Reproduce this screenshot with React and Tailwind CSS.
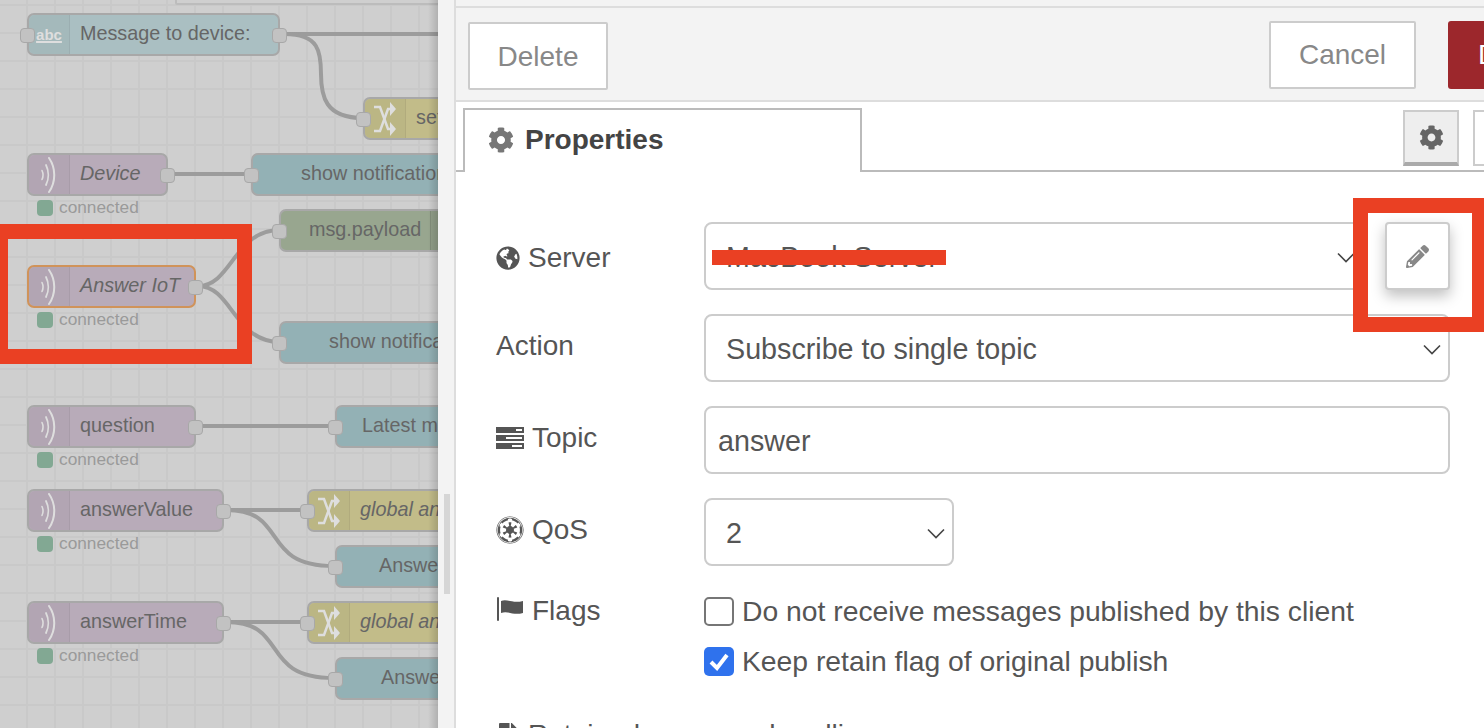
import React from "react";
import { FaCog, FaGlobeAmericas, FaEmpire, FaPencilAlt, FaFile } from "react-icons/fa";

// node colours are the dimmed versions, the editor tray overlay sits on the canvas
const PURPLE = "bg-[#b8abb9]";
const TEAL = "bg-[#aabfc2]";
const BLUE = "bg-[#93b1b5]";
const YELLOW = "bg-[#c2bc89]";
const GREEN = "bg-[#98a68f]";

const WifiIcon = () => (
  <svg width="20" height="36" viewBox="0 0 20 36" fill="none" stroke="#dedede" strokeLinecap="round">
    <path d="M3 13.5c1.4 3 1.4 6 0 9" strokeWidth="1.6" />
    <path d="M7 8c3 6 3 14 0 20" strokeWidth="1.8" />
    <path d="M10 1c7 10 7 24 0 34" strokeWidth="2" />
  </svg>
);

const ShuffleIcon = () => (
  <svg width="22" height="34" viewBox="0 0 22 34" fill="#dedede">
    <path d="M0 5h6l8 22h3" fill="none" stroke="#dedede" strokeWidth="2.5" />
    <path d="M0 29h6l8-22h3" fill="none" stroke="#dedede" strokeWidth="2.5" />
    <path d="M16 0l6 7-6 7z" />
    <path d="M16 20l6 7-6 7z" />
  </svg>
);

const Port = ({ className }) => (
  <div className={`absolute top-[13px] w-[15px] h-[15px] rounded-[4px] bg-[#c2c2c2] border border-[#a8a8a8] ${className}`}></div>
);

const Node = ({ x, y, w, color, label, italic, textLeft = 51, icon, inPort, outPort, selected, status, rightIcon }) => (
  <div className="absolute h-[43px]" style={{ left: x, top: y, width: w }}>
    <div className={`relative h-[43px] rounded-[7px] border-2 ${selected ? "border-[#d0935a]" : "border-[#a8a8a8]"} ${color}`}>
      {icon && (
        <div className="absolute left-0 top-0 bottom-0 w-[41px] flex items-center justify-center border-r border-[#0000000f] bg-[#00000008] rounded-l-[6px]">
          {icon}
        </div>
      )}
      {rightIcon && <div className="absolute right-0 top-0 bottom-0 w-[42px] border-l border-[#0000001a] bg-[#0000000a]"></div>}
      <div
        className={`absolute top-0 bottom-0 pb-[2px] flex items-center text-[19.8px] leading-none whitespace-nowrap text-[#666666] ${italic ? "italic" : ""}`}
        style={{ left: textLeft }}
      >
        {label}
      </div>
      {inPort && <Port className="left-[-9px]" />}
      {outPort && <Port className="right-[-9px]" />}
    </div>
    {status && (
      <div className="flex items-center mt-[3px] ml-[10px] gap-[6px]">
        <div className="w-[16px] h-[16px] rounded-[4px] bg-[#82a893]"></div>
        <span className="text-[17.3px] leading-none text-[#9a9a9a]">connected</span>
      </div>
    )}
  </div>
);

const shuffle = <ShuffleIcon />;
const abc = <span className="text-[15px] font-bold leading-none text-[#dedede] underline decoration-2">abc</span>;

const Canvas = () => (
  <div className="relative w-[438px] h-full shrink-0 overflow-hidden bg-[#cfcfcf] bg-[linear-gradient(#c9c9c9_2px,transparent_2px),linear-gradient(90deg,#c9c9c9_2px,transparent_2px)] bg-[size:28px_28px] bg-[position:26px_32px]">
    <div className="absolute left-[175px] top-[-4px] w-[270px] h-[9px] border-2 border-[#bcbcbc] rounded-[2px] bg-[#cfcfcf]"></div>

    <svg className="absolute inset-0" width="438" height="728" fill="none" stroke="#9c9c9c" strokeWidth="4">
      <path d="M285 34H438" />
      <path d="M285 34c34 0 36 18 36 40c0 22 4 44 42 44" />
      <path d="M170 174H250" />
      <path d="M198 286c34 0 36-56 82-56" />
      <path d="M198 286c34 0 36 56 82 56" />
      <path d="M198 426H334" />
      <path d="M226 510H306" />
      <path d="M226 510c64 0 32 56 108 56" />
      <path d="M226 622H306" />
      <path d="M226 622c64 0 32 56 108 56" />
    </svg>

    <Node x={27} y={13} w={253} color={TEAL} label="Message to device:" icon={abc} inPort outPort />
    <Node x={363} y={97} w={140} color={YELLOW} label="set" icon={shuffle} inPort />
    <Node x={27} y={153} w={141} color={PURPLE} label="Device" italic icon={<WifiIcon />} outPort status />
    <Node x={251} y={153} w={260} color={BLUE} label="show notification" textLeft={48} inPort />
    <Node x={279} y={209} w={195} color={GREEN} label="msg.payload" textLeft={28} inPort rightIcon />
    <Node x={27} y={265} w={169} color={PURPLE} label="Answer IoT" italic icon={<WifiIcon />} outPort selected status />
    <Node x={279} y={321} w={260} color={BLUE} label="show notification" textLeft={48} inPort />
    <Node x={27} y={405} w={169} color={PURPLE} label="question" icon={<WifiIcon />} outPort status />
    <Node x={335} y={405} w={220} color={BLUE} label="Latest msg" textLeft={25} inPort />
    <Node x={27} y={489} w={197} color={PURPLE} label="answerValue" icon={<WifiIcon />} outPort status />
    <Node x={307} y={489} w={200} color={YELLOW} label="global answer" italic icon={shuffle} inPort />
    <Node x={335} y={545} w={180} color={BLUE} label="Answer" textLeft={42} inPort />
    <Node x={27} y={601} w={197} color={PURPLE} label="answerTime" icon={<WifiIcon />} outPort status />
    <Node x={307} y={601} w={200} color={YELLOW} label="global answer" italic icon={shuffle} inPort />
    <Node x={335} y={657} w={180} color={BLUE} label="Answer" textLeft={44} inPort />

    <div className="absolute right-0 top-0 bottom-0 w-[10px] bg-gradient-to-r from-transparent to-[#00000026]"></div>
  </div>
);

const TasksIcon = () => (
  <svg width="28" height="22" viewBox="0 0 28 22" fill="#555555">
    <path d="M0 0h28v6H0zM0 8h28v6H0zM0 16h28v6H0z" />
    <path d="M20 2h6v2h-6zM10 10h16v2H10zM16 18h10v2H16z" fill="#ffffff" />
  </svg>
);

const FlagIcon = () => (
  <svg width="28" height="24" viewBox="0 0 28 24" fill="#555555">
    <rect x="1" y="0" width="2" height="24" rx="1" />
    <path d="M5 4c6-3 11 3 22 0v12c-10 3-15-3-22 0z" />
  </svg>
);

const Chevron = () => (
  <svg className="absolute right-[7px] top-[28px]" width="18" height="12" viewBox="0 0 18 12" fill="none" stroke="#444444" strokeWidth="1.6">
    <path d="M1 1.5l8 8 8-8" />
  </svg>
);

const Row = ({ icon, label, className, labelClass, children }) => (
  <div className={`flex items-start ${className}`}>
    <div className={`w-[248px] shrink-0 flex items-center pl-[40px] text-[28px] leading-none text-[#555555] ${labelClass}`}>
      {icon}
      <span>{label}</span>
    </div>
    {children}
  </div>
);

const Field = ({ className, select, children }) => (
  <div className={`relative h-[68px] rounded-[8px] border-2 border-[#cccccc] bg-white flex items-center pt-[4px] text-[28.7px] text-[#555555] ${className}`}>
    {children}
    {select && <Chevron />}
  </div>
);

const Editor = () => (
  <div className="flex-1 min-w-0 h-full flex flex-col bg-white overflow-hidden">
    <div className="h-[102px] shrink-0 bg-[#f3f3f3] border-b-2 border-[#dddddd] relative">
      <div className="h-[8px] border-b-2 border-[#dddddd]"></div>
      <div className="flex items-center pl-[12px] pt-[14px]">
        <button className="w-[140px] h-[68px] pt-[2px] bg-white border-2 border-[#cccccc] rounded-[2px] text-[28px] text-[#888888]">Delete</button>
        <button className="ml-auto w-[147px] h-[68px] bg-white border-2 border-[#cccccc] rounded-[2px] text-[28px] text-[#888888] -mt-[2px]">Cancel</button>
        <button className="ml-[32px] mr-[-60px] w-[96px] h-[68px] rounded-[3px] bg-[#9c272c] -mt-[2px] text-[28px] text-white text-left pl-[30px] overflow-hidden shrink-0">D</button>
      </div>
    </div>

    <div className="h-[70px] shrink-0 flex items-end border-b-2 border-[#bbbbbb] relative">
      <div className="ml-[7px] mb-[-2px] w-[399px] h-[64px] pb-[2px] bg-white border-2 border-b-0 border-[#bbbbbb] flex items-center pl-[23px] gap-[11px] text-[28px] font-bold text-[#444444]">
        <FaCog className="w-[26px] h-[26px] text-[#777777]" />
        <span>Properties</span>
      </div>
      <div className="ml-auto flex mb-[4px] mr-[-45px] gap-[14px]">
        <div className="w-[56px] h-[56px] bg-[#eeeeee] border-2 border-[#cccccc] border-b-4 border-b-[#aaaaaa] flex items-center justify-center">
          <FaCog className="w-[25px] h-[25px] text-[#666666]" />
        </div>
        <div className="w-[56px] h-[56px] bg-white border-2 border-[#cccccc]"></div>
      </div>
    </div>

    <div className="pt-[50px]">
      <Row icon={<FaGlobeAmericas className="w-[24px] h-[24px] mr-[8px]" />} label="Server" labelClass="h-[72px]">
        <Field className="w-[660px] pl-[20px]" select>MacBook Server</Field>
        <button className="ml-[21px] w-[65px] h-[68px] bg-white border-2 border-[#cccccc] rounded-[4px] shadow-[0_6px_14px_rgba(0,0,0,0.25)] flex items-center justify-center">
          <FaPencilAlt className="w-[23px] h-[23px] text-[#888888]" />
        </button>
      </Row>
      <Row label="Action" className="mt-[20px]" labelClass="h-[64px]">
        <Field className="w-[746px] pl-[20px]" select>Subscribe to single topic</Field>
      </Row>
      <Row icon={<TasksIcon />} label="Topic" className="mt-[24px]" labelClass="h-[64px] gap-[8px]">
        <Field className="w-[746px] pl-[12px]">answer</Field>
      </Row>
      <Row icon={<FaEmpire className="w-[28px] h-[28px]" />} label="QoS" className="mt-[24px]" labelClass="h-[64px] gap-[8px]">
        <Field className="w-[250px] pl-[20px]" select>2</Field>
      </Row>
      <div className="flex mt-[24px]">
        <div className="w-[248px] shrink-0 pl-[40px] flex items-start gap-[8px] text-[28px] leading-none text-[#555555] pt-[7px]">
          <FlagIcon />
          <span>Flags</span>
        </div>
        <div className="flex flex-col gap-[21px] text-[28.3px] leading-none text-[#555555] pt-[7px]">
          <div className="flex items-center gap-[8px] h-[29px]">
            <div className="w-[30px] h-[29px] rounded-[5px] border-2 border-[#767676] bg-white"></div>
            <span>Do not receive messages published by this client</span>
          </div>
          <div className="flex items-center gap-[8px] h-[29px]">
            <div className="w-[30px] h-[29px] rounded-[5px] bg-[#2f72ed] flex items-center justify-center">
              <svg width="20" height="18" viewBox="0 0 20 18" fill="none" stroke="#ffffff" strokeWidth="4">
                <path d="M2 9l6 6L18 2" />
              </svg>
            </div>
            <span>Keep retain flag of original publish</span>
          </div>
        </div>
      </div>
      <div className="flex items-center pl-[40px] gap-[8px] mt-[45px] text-[28px] leading-none text-[#555555] whitespace-nowrap">
        <FaFile className="w-[24px] h-[24px]" />
        <span>Retained message handling</span>
      </div>
    </div>
  </div>
);

export default function App() {
  return (
    <div className="relative w-[1484px] h-[728px] overflow-hidden flex font-['Liberation_Sans',Arial,sans-serif]">
      <Canvas />
      {/* gutter with the tray's resize scrollbar */}
      <div className="w-[18px] h-full shrink-0 bg-[#f3f3f3] border-r-2 border-[#dddddd] relative">
        <div className="absolute left-[6px] top-[494px] w-[6px] h-[100px] bg-[#d6d6d6]"></div>
      </div>
      <Editor />

      {/* red annotation boxes drawn over the screenshot */}
      <div className="absolute left-0 top-[224px] w-[252px] h-[140px] border-[15px] border-l-[8px] border-[#ea4023]"></div>
      <div className="absolute left-[1353px] top-[198px] w-[131px] h-[134px] border-[15px] border-r-[12px] border-[#ea4023]"></div>
      <div className="absolute left-[712px] top-[250px] w-[234px] h-[15px] bg-[#ea4023]"></div>
    </div>
  );
}
